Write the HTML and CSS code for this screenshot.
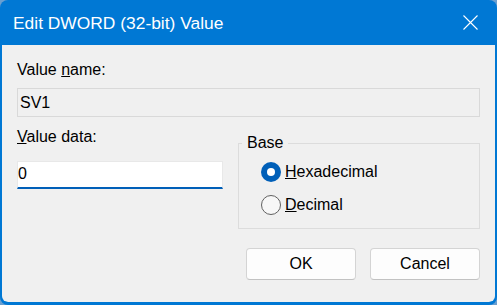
FILE: index.html
```html
<!DOCTYPE html>
<html lang="en">
<head>
  <meta charset="UTF-8" />
  <meta name="viewport" content="width=device-width, initial-scale=1" />
  <title>Edit DWORD (32-bit) Value</title>
  <link rel="stylesheet" href="styles.css">
</head>
<body>

<div class="window">
  <div class="titlebar">
    <span class="title">Edit DWORD (32-bit) Value</span>
    <button type="button" class="close" aria-label="Close">
      <svg width="15" height="15" viewBox="0 0 15 15">
        <path d="M0.5 0.5 L14.5 14.5 M14.5 0.5 L0.5 14.5" stroke="#fff" stroke-width="1.1" fill="none" />
      </svg>
    </button>
  </div>

  <div class="content">
    <div class="label">Value <u>n</u>ame:</div>
    <div class="field readonly">SV1</div>

    <div class="lower">
      <div class="data-col">
        <div class="label"><u>V</u>alue data:</div>
        <input type="text" class="data-input" value="0" />
      </div>

      <fieldset class="base">
        <legend>Base</legend>
        <div class="radio-list">
          <div class="radio"><span class="circle checked"></span><span><u>H</u>exadecimal</span></div>
          <div class="radio"><span class="circle"></span><span><u>D</u>ecimal</span></div>
        </div>
      </fieldset>
    </div>

    <div class="buttons">
      <button type="button" class="btn">OK</button>
      <button type="button" class="btn">Cancel</button>
    </div>
  </div>
</div>

</body>
</html>
```

FILE: styles.css
```css
body {
  margin: 0;
  background-color: #6a9fd0;
  font-family: 'Liberation Sans', Arial, sans-serif;
  font-size: 16px;
  color: #000;
}
.window {
  width: 497px;
  height: 305px;
  box-sizing: border-box;
  background-color: #0078d4;
  border-radius: 8px;
  border-bottom: 3px solid #0078d4;
  display: flex;
  flex-direction: column;
  overflow: hidden;
}
.titlebar {
  height: 45px;
  flex: none;
  display: flex;
  align-items: center;
  justify-content: space-between;
  padding-left: 13px;
  color: #fff;
}
.title {
  font-size: 17.4px;
  line-height: 20px;
}
.close {
  background: transparent;
  border: none;
  padding: 0;
  margin-right: 19px;
  width: 15px;
  height: 15px;
  display: flex;
}
.content {
  flex: 1;
  margin: 0 2px;
  background-color: #f0f0f0;
  border-radius: 0 0 6px 6px;
  padding: 15px 15px 0 15px;
}
.label {
  line-height: 20px;
}
.field {
  margin-top: 8px;
  height: 29px;
  box-sizing: border-box;
  border: 1px solid #d9d9d9;
  padding: 0 2px;
  line-height: 27px;
}
.lower {
  margin-top: 10px;
  display: grid;
  grid-template-columns: 206px 1fr;
  column-gap: 15px;
  align-items: start;
}
.data-input {
  display: block;
  margin-top: 14px;
  width: 100%;
  height: 28px;
  box-sizing: border-box;
  border: 1px solid #e8e8e8;
  border-bottom: 2px solid #005fb8;
  background-color: #fff;
  padding: 0 0 1px 0;
  font: inherit;
  line-height: 20px;
  outline: none;
}
.base {
  margin: 6px 0 0 0;
  border: 1px solid #dcdcdc;
  padding: 9px 3px 13px 3px;
  min-width: 0;
}
.base legend {
  padding: 0 5px;
  line-height: 20px;
}
.radio-list {
  display: flex;
  flex-direction: column;
  gap: 13px;
  padding-left: 19px;
}
.radio {
  display: flex;
  align-items: center;
  gap: 4px;
  line-height: 20px;
}
.circle {
  width: 20px;
  height: 20px;
  box-sizing: border-box;
  border-radius: 50%;
  border: 1px solid #616161;
  background-color: #f7f7f7;
  display: flex;
  align-items: center;
  justify-content: center;
}
.circle.checked {
  border: none;
  background-color: #005fb8;
}
.circle.checked::after {
  content: '';
  width: 8px;
  height: 8px;
  border-radius: 50%;
  background-color: #fff;
}
.buttons {
  margin-top: 19px;
  display: flex;
  justify-content: flex-end;
  gap: 14px;
}
.btn {
  width: 110px;
  height: 32px;
  box-sizing: border-box;
  background-color: #fdfdfd;
  border: 1px solid #d4d4d4;
  border-bottom-color: #c2c2c2;
  border-radius: 4px;
  font: inherit;
  color: #000;
  padding: 0;
}
```
